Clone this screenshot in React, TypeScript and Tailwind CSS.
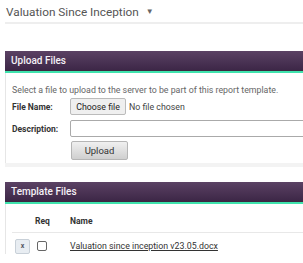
export default function App() {
  return (
    <div className="w-[303px] h-[263px] overflow-hidden bg-white font-['Roboto',sans-serif] text-[#555]">
      <div className="ml-[5px] pt-[4px]">
        <div className="flex items-center h-[16px] pl-[1px] text-[11.8px] leading-[16px] text-[#555]">
          <span>Valuation Since Inception</span>
          <span className="ml-[7px] text-[8px] text-[#666]">▼</span>
        </div>
        <div className="h-[2px] bg-[#eeeeee] mt-[2px]" />
      </div>

      <div className="ml-[5px] mt-[27px]">
        <div className="h-[19px] flex items-center pl-[6px] text-[10px] font-medium text-[#f4f0f6] bg-gradient-to-b from-[#5b4264] to-[#3d2747]">
          Upload Files
        </div>
        <div className="h-[1px] bg-[#3a2a40]" />
        <div className="h-[2px] bg-[#3fe3ad]" />
        <div className="border-l border-[#e6e6e6] pl-[6px] pt-[11px] pb-[3px] text-[8.5px] leading-[12px]">
          <div className="text-[#666] whitespace-nowrap text-[8.8px]">Select a file to upload to the server to be part of this report template.</div>
          <div className="flex items-center mt-[2px] h-[17px]">
            <span className="w-[58px] shrink-0 font-bold text-[#333]">File Name:</span>
            <span className="h-[17px] w-[56px] shrink-0 flex items-center justify-center border border-[#bbb] rounded-[2px] bg-[#efefef] text-[#222] text-[8.8px]">Choose file</span>
            <span className="ml-[3px] text-[#444] text-[8.8px] whitespace-nowrap">No file chosen</span>
          </div>
          <div className="flex items-center mt-[5px] h-[17px]">
            <span className="w-[58px] shrink-0 font-bold text-[#333]">Description:</span>
            <div className="w-[260px] shrink-0 h-[17px] border border-[#aaa] rounded-[2px]" />
          </div>
          <div className="ml-[59px] mt-[4px] w-[57px] h-[19px] flex items-center justify-center rounded-[2px] border border-[#b5b5b5] bg-gradient-to-b from-[#f0f0f0] to-[#cfcfcf] text-[9.5px] text-[#333]">
            Upload
          </div>
        </div>
        <div className="h-[4px] bg-[#f3f3f3]" />
      </div>

      <div className="ml-[5px] mt-[15px]">
        <div className="h-[19px] flex items-center pl-[6px] text-[10px] font-medium text-[#f4f0f6] bg-gradient-to-b from-[#5b4264] to-[#3d2747]">
          Template Files
        </div>
        <div className="h-[1px] bg-[#3a2a40]" />
        <div className="h-[2px] bg-[#3fe3ad]" />
        <div className="border-l border-[#e6e6e6] pl-[6px] pt-[11px] text-[8.5px] leading-[12px]">
          <div className="flex items-center h-[12px] border-b border-[#e8e8e8] pb-[5px] box-content">
            <span className="w-[23px]" />
            <span className="w-[35px] font-bold text-[#333]">Req</span>
            <span className="font-bold text-[#333]">Name</span>
          </div>
          <div className="flex items-center ml-[3px] mt-[5px] h-[16px]">
            <span className="w-[15px] h-[15px] flex items-center justify-center rounded-[2px] border border-[#c8d0d8] bg-[#e8edf2] text-[7px] font-bold text-[#556]">x</span>
            <span className="ml-[7px] w-[10px] h-[10px] border border-[#666] rounded-[2px] bg-white" />
            <span className="ml-[23px] underline text-[#333] text-[8.8px]">Valuation since inception v23.05.docx</span>
          </div>
        </div>
      </div>
    </div>
  )
}
